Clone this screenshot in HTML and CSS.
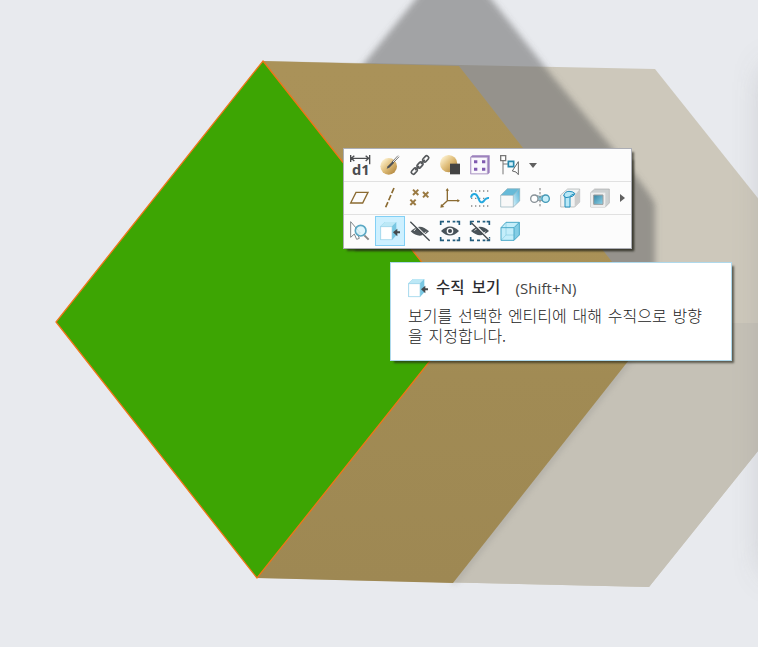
FILE: index.html
```html
<!DOCTYPE html>
<html lang="ko">
<head>
<meta charset="utf-8">
<title>3D 모델 뷰</title>
<link rel="stylesheet" href="styles.css">
</head>
<body>
<main class="viewport">
<svg class="scene" viewBox="0 0 758 647">
  <defs>
    <linearGradient id="tan" x1="0" y1="0" x2="0" y2="1"><stop offset="0" stop-color="#aa9259"/><stop offset=".45" stop-color="#a99157"/><stop offset=".6" stop-color="#a18b54"/><stop offset="1" stop-color="#9e8853"/></linearGradient>
    <filter id="soft" x="-20%" y="-20%" width="140%" height="140%"><feGaussianBlur stdDeviation="3"/></filter>
    <filter id="wide" filterUnits="userSpaceOnUse" x="600" y="-100" width="350" height="850"><feGaussianBlur stdDeviation="18"/></filter>
    <clipPath id="slab"><path d="M263 61L655 69 859 325 649 587 257 578z"/></clipPath>
    <linearGradient id="gold" x1="0" y1="0" x2="1" y2="1"><stop offset=".1" stop-color="#fff4d3"/><stop offset=".5" stop-color="#dfbd79"/><stop offset="1" stop-color="#a77a31"/></linearGradient>
    <linearGradient id="ice" x1="0" y1="1" x2="1" y2="0"><stop offset="0" stop-color="#d8f2fb"/><stop offset="1" stop-color="#4fb0d5"/></linearGradient>
    <linearGradient id="steel" x1="0" y1="0" x2="1" y2="1"><stop offset="0" stop-color="#3583a2"/><stop offset="1" stop-color="#8fd5eb"/></linearGradient>
  </defs>
  <path d="M655 69L859 325 649 587 257 578 263 61z" fill="#cdc8bb"/>
  <path clip-path="url(#slab)" d="M430 323H758V600H430z" fill="#c5c1b6"/>
  <path d="M780 70V570" stroke="#888890" stroke-width="16" opacity=".75" filter="url(#wide)"/>
  <path d="M455 -50L415 0 325 112 560 330 655 330 655 205Q653 195 610 145L553 77 492 0 452 -50z" fill="#5c5c5c" fill-opacity=".5" filter="url(#soft)"/>
  <path d="M659 322L453 583" stroke="#777" stroke-width="5" opacity=".3" filter="url(#soft)"/>
  <path d="M263 61L459 66 659 322 453 583 257 578z" fill="url(#tan)"/>
  <path d="M263 61L465 317 257 578 56 322z" fill="#3da503" stroke="#f07418" stroke-width="1.3"/>
</svg>

<section class="toolbar">
  <div class="row">
    <button><svg viewBox="0 0 60 60"><path fill="none" stroke="#4b4d50" stroke-width="4" d="M2 0V21M59 0V28M3 10H57M13 2L4 10 13 18M47 2L56 10 47 18"/><text class="dimension" x="6" y="60">d1</text></svg></button>
    <button><svg viewBox="0 0 60 60"><circle cx="26" cy="34" r="25" fill="url(#gold)"/><path d="M54 2L36 21M57 5L39 24" stroke="#666" stroke-width="3"/><path d="M56 3L37 23" stroke="#eee" stroke-width="3"/><path d="M38 19L23 34 20 41 28 38 42 24z" fill="#505357"/></svg></button>
    <button><svg viewBox="0 0 60 60" fill="none" stroke="#55585b" stroke-width="5"><g transform="rotate(-47 30 30)"><rect x="-5" y="24" width="20" height="12" rx="5"/><rect x="20" y="24" width="20" height="12" rx="5"/><rect x="45" y="24" width="20" height="12" rx="5"/><path d="M9 30H26M34 30H51"/></g></svg></button>
    <button><svg viewBox="0 0 60 60"><circle cx="26" cy="26" r="26" fill="url(#gold)"/><path d="M30 26H60V58H30z" fill="#444"/></svg></button>
    <button><svg viewBox="0 0 60 60"><path d="M1 6L7 1H59V53L54 58H1z" fill="#9b7fbd"/><path d="M3 7H52V56H3z" fill="#faf8fd" stroke="#b5a4c9" stroke-width="2"/><path d="M12 16H22V25H12zM36 16H46V25H36zM12 38H22V47H12zM36 38H46V47H36z" fill="#805ab0"/></svg></button>
    <button><svg viewBox="0 0 60 60"><path d="M9 17V58M9 27H24" fill="none" stroke="#777" stroke-width="3"/><path d="M2 2H17V17H2z" fill="#fff" stroke="#777" stroke-width="4"/><path d="M25 19H41V35H25z" fill="#d6f3fc" stroke="#2788ac" stroke-width="5"/><path d="M55 20V59L48 51 37 48z" fill="#fff" stroke="#666" stroke-width="3"/></svg></button>
    <i class="down"></i>
  </div>
  <div class="row">
    <button><svg viewBox="0 0 60 60"><path d="M18 13H54L38 45H2z" fill="none" stroke="#8b6b32" stroke-width="4"/></svg></button>
    <button><svg viewBox="0 0 60 60"><path d="M42 0L16 60" stroke="#8b6b32" stroke-width="5" stroke-dasharray="17 6"/></svg></button>
    <button><svg viewBox="0 0 60 60"><path d="M9 5L25 21M25 5L9 21M39 12L55 28M55 12L39 28M1 35L17 51M17 35L1 51" stroke="#9a7a43" stroke-width="6"/></svg></button>
    <button><svg viewBox="0 0 60 60"><path d="M22 4V38H57M22 38L4 55" fill="none" stroke="#8b6b32" stroke-width="4"/><path d="M17 8L22 0 27 8zM52 33L60 38 52 43zM3 48L1 59 13 57z" fill="#8b6b32"/></svg></button>
    <button><svg viewBox="0 0 60 60" fill="none"><path d="M3 9H57M3 31H57M3 54H57" stroke="#888" stroke-width="4" stroke-dasharray="4 8"/><path d="M3 29C5 15 18 14 23 26S30 46 38 42 43 28 57 30" stroke="#24a8df" stroke-width="6"/></svg></button>
    <button><svg viewBox="0 0 60 60"><path d="M2 22L22 2H59L40 22z" fill="#66bad8"/><path d="M59 2V39L40 57V22z" fill="url(#ice)"/><path d="M2 22H40V57H2z" fill="#f8f8f8"/><path d="M2 22L22 2H59V39L40 57H2zM2 22H40M40 22V57M40 22L59 2" fill="none" stroke="#8daeba" stroke-width="2"/></svg></button>
    <button><svg viewBox="0 0 60 60"><path d="M15 21L30 25 46 21V42L30 36 15 41z" fill="#91d4e9" stroke="#75858c" stroke-width="2"/><circle cx="13" cy="32" r="11" fill="#fff" stroke="#899298" stroke-width="4"/><circle cx="47" cy="32" r="11" fill="#c7effa" stroke="#4499b7" stroke-width="4"/><path d="M30 0V60" stroke="#777" stroke-width="3" stroke-dasharray="7 5"/></svg></button>
    <button><svg viewBox="0 0 60 60"><path d="M2 21L23 3H59V42L44 57H2z" fill="#f1f2f2" stroke="#a5a9aa" stroke-width="2"/><path d="M44 22L59 4V42L44 57z" fill="#ccc"/><path d="M11 23Q15 10 27 10 39 10 45 17L39 24 30 27V57H15V25z" fill="#b8e8f7" stroke="#218dbb" stroke-width="3"/><path d="M11 24L17 29 29 27Q33 19 43 18" fill="none" stroke="#218dbb" stroke-width="3"/></svg></button>
    <button><svg viewBox="0 0 60 60"><path d="M2 14L14 3H58V45L46 57H2z" fill="#cdd1d2" stroke="#aaa" stroke-width="2"/><path d="M2 14H46V57H2z" fill="#eee"/><path d="M11 21H39V49H11z" fill="url(#steel)" stroke="#9b9c9c" stroke-width="3"/></svg></button>
    <i class="next"></i>
  </div>
  <div class="row">
    <button><svg viewBox="0 0 60 60"><path d="M2 2V49L13 39 20 55 28 52 21 36H31z" fill="#fff" stroke="#81888b" stroke-width="3"/><path d="M43 43L56 56" stroke="#888" stroke-width="6"/><circle cx="32" cy="29" r="16" fill="#d9f4fc" fill-opacity=".85" stroke="#5aa8c4" stroke-width="5"/></svg></button>
    <button class="selected"><svg viewBox="0 0 60 60"><path d="M1 16L15 3H49V43L36 57H1z" fill="#79c7e2"/><path d="M1 16L15 3H49L36 16z" fill="#bce8f6"/><path d="M2 17H36V56H2z" fill="#fff" stroke="#a1d8ed" stroke-width="2"/><path d="M60 31V37H52V46L39 34 52 23V31z" fill="#44494c"/></svg></button>
    <button><svg viewBox="0 0 60 60"><path d="M2 31Q29 3 57 31 29 57 2 31z" fill="#50575b"/><path d="M12 30Q15 24 20 22M36 43Q43 39 48 32" fill="none" stroke="#eee" stroke-width="3"/><path d="M4 1L60 57" stroke="#fff" stroke-width="4"/><path d="M1 2L59 59" stroke="#454b4f" stroke-width="4"/></svg></button>
    <button><svg viewBox="0 0 60 60"><path d="M2 12V2H12M21 2H30M38 2H46M50 2H58V12M2 48V58H12M21 58H30M38 58H46M50 58H58V48" fill="none" stroke="#245e7e" stroke-width="5"/><path d="M3 30Q30 3 57 30 30 57 3 30z" fill="#495359"/><circle cx="30" cy="30" r="10" fill="#fafafa"/><circle cx="30" cy="30" r="6" fill="#414950"/></svg></button>
    <button><svg viewBox="0 0 60 60"><path d="M2 12V2H12M21 2H30M38 2H46M50 2H58V12M2 48V58H12M21 58H30M38 58H46M50 58H58V48" fill="none" stroke="#245e7e" stroke-width="5"/><path d="M3 30Q30 5 57 30 30 55 3 30z" fill="#495359"/><path d="M14 29Q17 24 22 22M37 40Q43 37 46 32" fill="none" stroke="#eee" stroke-width="3"/><path d="M8 4L58 54" stroke="#fff" stroke-width="4"/><path d="M4 5L56 56" stroke="#454b4f" stroke-width="4"/></svg></button>
    <button><svg viewBox="0 0 60 60"><path d="M3 20L18 4H58V42L42 58H3z" fill="#c4eefa"/><path d="M42 20L58 4V42L42 58z" fill="#83cde5"/><path d="M18 4V42H58M18 42L3 58" fill="none" stroke="#86cde2" stroke-width="2"/><path d="M3 20L18 4H58V42L42 58H3zM3 20H42V58M42 20L58 4" fill="none" stroke="#4ba9c8" stroke-width="3"/></svg></button>
  </div>
</section>

<aside class="tooltip">
  <header>
    <svg viewBox="0 0 60 60"><path d="M1 16L15 3H49V43L36 57H1z" fill="#79c7e2"/><path d="M1 16L15 3H49L36 16z" fill="#bce8f6"/><path d="M2 17H36V56H2z" fill="#fff" stroke="#a1d8ed" stroke-width="2"/><path d="M60 31V37H52V46L39 34 52 23V31z" fill="#44494c"/></svg>
    <strong>수직 보기</strong><span>(Shift+N)</span>
  </header>
  <p>보기를 선택한 엔티티에 대해 수직으로 방향을 지정합니다.</p>
</aside>
</main>
</body>
</html>
```

FILE: styles.css
```css
* { box-sizing: border-box; }
body { margin: 0; font-family: "Noto Sans CJK KR", sans-serif; }
.viewport { position: relative; width: 758px; height: 647px; overflow: hidden; background: #e8eaee; }
.scene { display: block; width: 100%; height: 100%; }
.toolbar {
  position: absolute; left: 343px; top: 148px; width: 289px; height: 101px;
  border: 1px solid #acaeb5; background: #fcfcfc;
  box-shadow: 3px 3px 2px -1px rgba(35, 35, 25, .65), 7px 7px 2px -5px rgba(35, 35, 25, .4);
}
.row { display: flex; align-items: center; height: 32px; padding-left: 1px; }
.row + .row { height: 33px; border-top: 1px solid #e1e1e1; }
.row button { display: flex; flex: none; align-items: center; justify-content: center; width: 30px; height: 30px; padding: 0; border: 0; background: none; }
.row svg, .tooltip svg { display: block; flex: none; width: 20px; height: 20px; overflow: visible; }
.dimension { font: 700 44px "Open Sans", sans-serif; fill: #4b4d50; }
.row .selected { border: 1px solid #83d0f5; background: #cdf0ff; }
.down { margin-left: 4px; border: 4.5px solid transparent; border-top: 5px solid #606060; border-bottom: 0; }
.next { margin-left: 5px; border: 4.5px solid transparent; border-left: 5px solid #606060; border-right: 0; }
.tooltip {
  position: absolute; left: 390px; top: 262px; width: 342px; height: 99px;
  padding: 15px 17px; border: 1px solid #afd9ec; background: #fff; color: #444;
  box-shadow: 3px 3px 2px -1px rgba(35, 35, 25, .65);
}
.tooltip header { display: flex; align-items: center; height: 20px; }
.tooltip strong { margin: -4px 0 0 8px; font-size: 15.5px; line-height: 20px; font-weight: 500; color: #2c2c30; word-spacing: 3px; white-space: nowrap; }
.tooltip span { margin-left: 15px; font: 15px/20px "Open Sans", sans-serif; letter-spacing: .1px; }
.tooltip p { margin: 7px 0 0; font-size: 16px; line-height: 20px; font-weight: 300; color: #222; word-spacing: 1.3px; }
```
